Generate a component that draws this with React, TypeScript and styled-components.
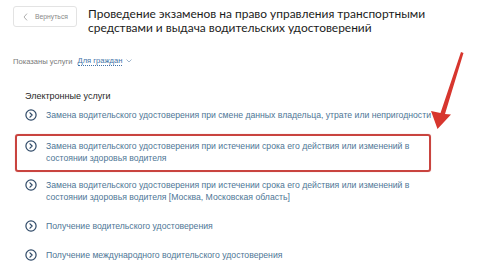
import React from "react";
import styled, { createGlobalStyle } from "styled-components";

const Global = createGlobalStyle`
  html, body { margin: 0; padding: 0; background: #fff; }
  body { width: 480px; height: 265px; overflow: hidden; }
`;

const Page = styled.div`
  position: relative;
  width: 480px;
  height: 265px;
  overflow: hidden;
  padding: 6px 0 0 13px;
  box-sizing: border-box;
  font-family: "Liberation Sans", Arial, sans-serif;
`;

const Header = styled.div`
  display: flex;
  align-items: flex-start;
  gap: 11px;
`;

const BackButton = styled.button`
  display: flex;
  align-items: center;
  gap: 7px;
  width: 64px;
  height: 21px;
  padding: 0 0 0 9px;
  box-sizing: border-box;
  border: 1px solid #e3e3e3;
  border-radius: 3px;
  background: #fff;
  color: #8a8a8a;
  font-family: "Liberation Sans", Arial, sans-serif;
  font-size: 6.8px;
`;

const Title = styled.h1`
  margin: 1px 0 0;
  font-family: Lato, "Open Sans", sans-serif;
  font-weight: 400;
  font-size: 11.95px;
  line-height: 14px;
  color: #1b1b1b;
`;

const Filter = styled.div`
  display: flex;
  align-items: center;
  margin-top: 20px;
  font-size: 7.6px;
  color: #7a7a7a;
  height: 12px;
`;

const FilterLink = styled.span`
  margin-left: 5px;
  color: #3f72a8;
  border-bottom: 1px dotted #3f72a8;
  line-height: 8px;
`;

const Section = styled.div`
  margin-top: 23px;
  padding-left: 12px;
`;

const SectionTitle = styled.div`
  font-size: 9px;
  color: #1f1f1f;
  line-height: 12px;
`;

const List = styled.div`
  display: flex;
  flex-direction: column;
  margin-top: -1.5px;
  width: 408px;
`;

const Item = styled.div<{ $hl?: boolean }>`
  position: relative;
  display: flex;
  align-items: flex-start;
  gap: 9px;
  padding: ${(p) => (p.$hl ? "10.5px 0 6.5px" : "8.5px 0")};
  font-size: 8.66px;
  line-height: 12px;
  color: #4e7696;
  white-space: nowrap;
  ${(p) =>
    p.$hl
      ? `&::before {
    content: "";
    position: absolute;
    left: -10px;
    right: 2px;
    top: 4.5px;
    bottom: -1.5px;
    border: 2px solid #c9443f;
    border-radius: 3px;
    box-shadow: 0 0 1px rgba(201,68,63,0.5);
  }`
      : ""}
`;

const IconWrap = styled.span`
  flex: none;
  width: 12px;
  height: 12px;
  display: flex;
  align-items: center;
  justify-content: center;
`;

const Arrow = styled.svg`
  position: absolute;
  left: 0;
  top: 0;
  pointer-events: none;
`;

const CircleChevron = () => (
  <IconWrap>
    <svg width="12" height="12" viewBox="0 0 12 12">
      <circle cx="6" cy="6" r="5.1" fill="none" stroke="#2f4a68" strokeWidth="1.2" />
      <path d="M5 3.8 L7.1 6 L5 8.2" fill="none" stroke="#2f4a68" strokeWidth="1.2" strokeLinecap="round" strokeLinejoin="round" />
    </svg>
  </IconWrap>
);

const items: { text: React.ReactNode; hl?: boolean }[] = [
  { text: "Замена водительского удостоверения при смене данных владельца, утрате или непригодности" },
  {
    text: (
      <>
        Замена водительского удостоверения при истечении срока его действия или изменений в
        <br />
        состоянии здоровья водителя
      </>
    ),
    hl: true,
  },
  {
    text: (
      <>
        Замена водительского удостоверения при истечении срока его действия или изменений в
        <br />
        состоянии здоровья водителя [Москва, Московская область]
      </>
    ),
  },
  { text: "Получение водительского удостоверения" },
  { text: "Получение международного водительского удостоверения" },
];

export default function App() {
  return (
    <Page>
      <Global />
      <Header>
        <BackButton>
          <svg width="5" height="8" viewBox="0 0 5 8">
            <path d="M4 0.6 L1 4 L4 7.4" fill="none" stroke="#9a9a9a" strokeWidth="0.8" />
          </svg>
          Вернуться
        </BackButton>
        <Title>
          Проведение экзаменов на право управления транспортными
          <br />
          средствами и выдача водительских удостоверений
        </Title>
      </Header>
      <Filter>
        Показаны услуги
        <FilterLink>Для граждан</FilterLink>
        <svg width="8" height="6" viewBox="0 0 8 6" style={{ marginLeft: 3 }}>
          <path d="M1.5 1.5 L4 4 L6.5 1.5" fill="none" stroke="#8aa4c0" strokeWidth="0.8" />
        </svg>
      </Filter>
      <Section>
        <SectionTitle>Электронные услуги</SectionTitle>
        <List>
          {items.map((it, i) => (
            <Item key={i} $hl={it.hl}>
              <CircleChevron />
              <span>{it.text}</span>
            </Item>
          ))}
        </List>
      </Section>
      <Arrow width="480" height="265" viewBox="0 0 480 265">
        <polygon points="461,52 463.5,53 445,114 451,114.5 437.5,129 431,111 440.5,113" fill="#d7362e" />
      </Arrow>
    </Page>
  );
}
